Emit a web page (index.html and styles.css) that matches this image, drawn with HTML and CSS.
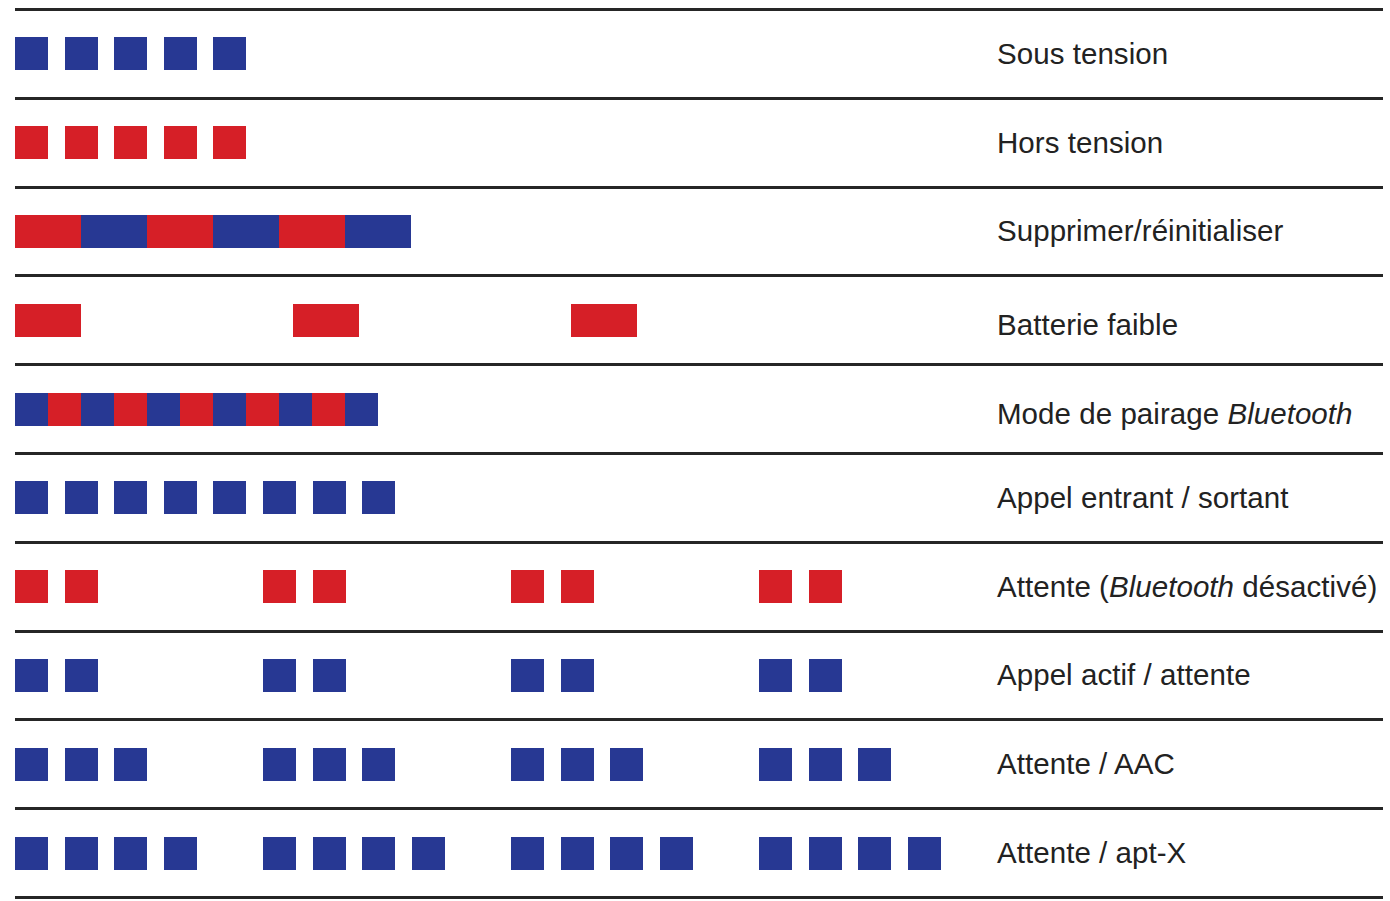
FILE: index.html
```html
<!DOCTYPE html>
<html lang="fr">
<head>
<meta charset="utf-8">
<title>Signaux lumineux</title>
<link rel="stylesheet" href="styles.css">
</head>
<body>
<div class="table">
  <div class="row">
    <div class="pattern">
      <span class="sq blue"></span><span class="sq blue"></span><span class="sq blue"></span><span class="sq blue"></span><span class="sq blue"></span>
    </div>
    <div class="label">Sous tension</div>
  </div>
  <div class="row">
    <div class="pattern">
      <span class="sq red"></span><span class="sq red"></span><span class="sq red"></span><span class="sq red"></span><span class="sq red"></span>
    </div>
    <div class="label">Hors tension</div>
  </div>
  <div class="row">
    <div class="bar">
      <span class="seg wide red"></span><span class="seg wide blue"></span><span class="seg wide red"></span><span class="seg wide blue"></span><span class="seg wide red"></span><span class="seg wide blue"></span>
    </div>
    <div class="label">Supprimer/réinitialiser</div>
  </div>
  <div class="row">
    <div class="pattern long">
      <span class="seg wide red"></span><span class="seg wide red"></span><span class="seg wide red"></span>
    </div>
    <div class="label low">Batterie faible</div>
  </div>
  <div class="row">
    <div class="bar">
      <span class="seg blue"></span><span class="seg red"></span><span class="seg blue"></span><span class="seg red"></span><span class="seg blue"></span><span class="seg red"></span><span class="seg blue"></span><span class="seg red"></span><span class="seg blue"></span><span class="seg red"></span><span class="seg blue"></span>
    </div>
    <div class="label low">Mode de pairage <em>Bluetooth</em></div>
  </div>
  <div class="row">
    <div class="pattern">
      <span class="sq blue"></span><span class="sq blue"></span><span class="sq blue"></span><span class="sq blue"></span><span class="sq blue"></span><span class="sq blue"></span><span class="sq blue"></span><span class="sq blue"></span>
    </div>
    <div class="label">Appel entrant / sortant</div>
  </div>
  <div class="row">
    <div class="pattern">
      <span class="sq red"></span><span class="sq red"></span><span class="sq"></span><span class="sq"></span><span class="sq"></span>
      <span class="sq red"></span><span class="sq red"></span><span class="sq"></span><span class="sq"></span><span class="sq"></span>
      <span class="sq red"></span><span class="sq red"></span><span class="sq"></span><span class="sq"></span><span class="sq"></span>
      <span class="sq red"></span><span class="sq red"></span>
    </div>
    <div class="label">Attente (<em>Bluetooth</em> désactivé)</div>
  </div>
  <div class="row">
    <div class="pattern">
      <span class="sq blue"></span><span class="sq blue"></span><span class="sq"></span><span class="sq"></span><span class="sq"></span>
      <span class="sq blue"></span><span class="sq blue"></span><span class="sq"></span><span class="sq"></span><span class="sq"></span>
      <span class="sq blue"></span><span class="sq blue"></span><span class="sq"></span><span class="sq"></span><span class="sq"></span>
      <span class="sq blue"></span><span class="sq blue"></span>
    </div>
    <div class="label">Appel actif / attente</div>
  </div>
  <div class="row">
    <div class="pattern">
      <span class="sq blue"></span><span class="sq blue"></span><span class="sq blue"></span><span class="sq"></span><span class="sq"></span>
      <span class="sq blue"></span><span class="sq blue"></span><span class="sq blue"></span><span class="sq"></span><span class="sq"></span>
      <span class="sq blue"></span><span class="sq blue"></span><span class="sq blue"></span><span class="sq"></span><span class="sq"></span>
      <span class="sq blue"></span><span class="sq blue"></span><span class="sq blue"></span>
    </div>
    <div class="label">Attente / AAC</div>
  </div>
  <div class="row">
    <div class="pattern">
      <span class="sq blue"></span><span class="sq blue"></span><span class="sq blue"></span><span class="sq blue"></span><span class="sq"></span>
      <span class="sq blue"></span><span class="sq blue"></span><span class="sq blue"></span><span class="sq blue"></span><span class="sq"></span>
      <span class="sq blue"></span><span class="sq blue"></span><span class="sq blue"></span><span class="sq blue"></span><span class="sq"></span>
      <span class="sq blue"></span><span class="sq blue"></span><span class="sq blue"></span><span class="sq blue"></span>
    </div>
    <div class="label">Attente / apt-X</div>
  </div>
</div>
</body>
</html>
```

FILE: styles.css
```css
html, body {
  margin: 0;
  padding: 0;
  background: #ffffff;
}

body {
  font-family: "Liberation Sans", Arial, sans-serif;
  color: #222222;
}

.table {
  margin: 8px 0 0 15px;
  width: 1368px;
  border-bottom: 3px solid #262626;
}

.row {
  display: grid;
  grid-template-columns: 982px 1fr;
  align-items: center;
  height: 85.8px;
  border-top: 3px solid #262626;
}

.pattern {
  display: flex;
  gap: 16.6px;
  align-items: center;
}

.pattern.long {
  gap: 212px;
}

.bar {
  display: flex;
  align-items: center;
}

.sq {
  display: block;
  width: 33px;
  height: 33px;
  flex: none;
}

.seg {
  display: block;
  width: 33px;
  height: 33px;
  flex: none;
}

.seg.wide {
  width: 66px;
}

.blue {
  background: #273893;
}

.red {
  background: #d61f27;
}

.label {
  font-size: 29.5px;
  line-height: 34px;
  letter-spacing: 0.05px;
  white-space: nowrap;
}

.label.low {
  padding-top: 10px;
}

.label em {
  font-style: italic;
}
```
